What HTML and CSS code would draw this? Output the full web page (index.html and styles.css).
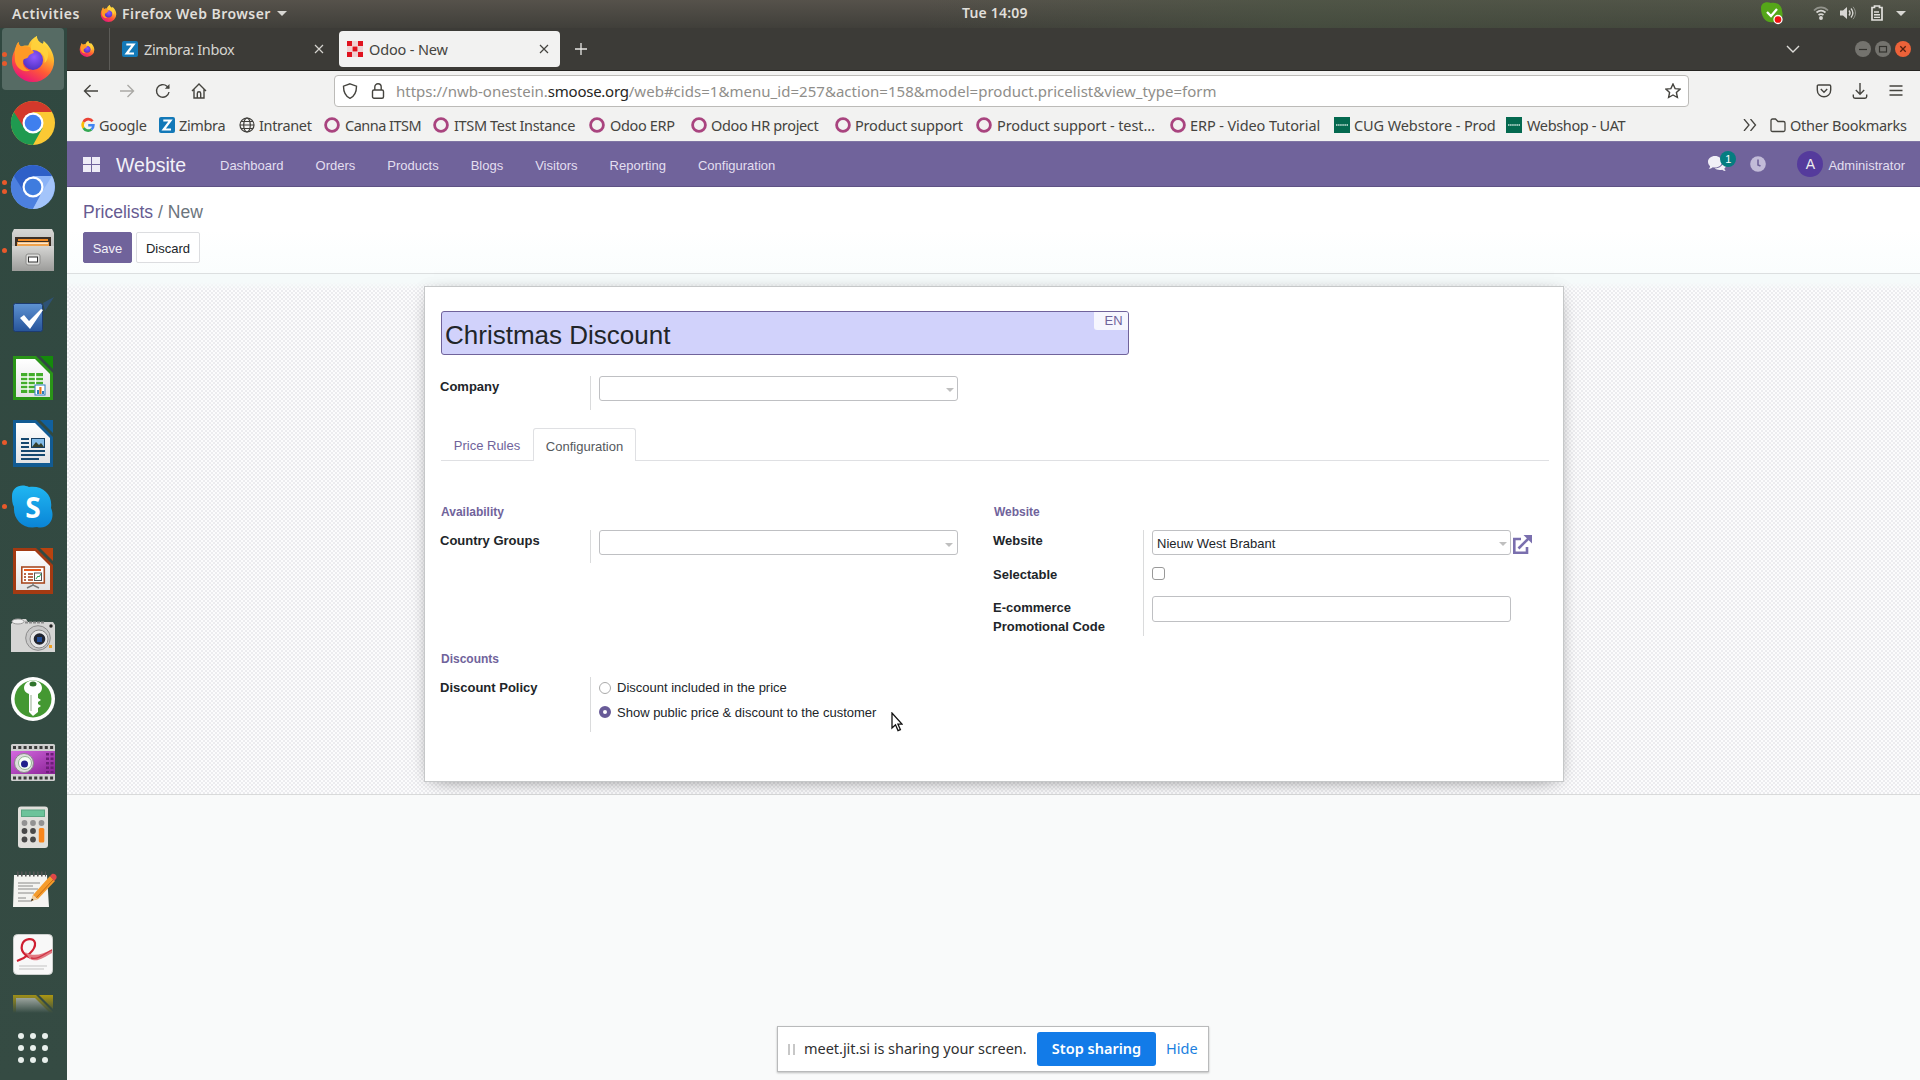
FILE: index.html
```html
<!DOCTYPE html>
<html lang="en">
<head>
<meta charset="utf-8">
<title>Odoo - New</title>
<link rel="stylesheet" href="styles.css">
</head>
<body>
<svg class="defs" width="0" height="0" aria-hidden="true">
  <defs>
    <linearGradient id="ffBody" x1=".8" y1="0" x2=".3" y2="1"><stop offset="0" stop-color="#fff44f"/><stop offset=".35" stop-color="#ffb52a"/><stop offset=".65" stop-color="#ff5a36"/><stop offset="1" stop-color="#e8127c"/></linearGradient>
    <radialGradient id="ffCore" cx=".55" cy=".35" r=".7"><stop offset="0" stop-color="#9059ff"/><stop offset="1" stop-color="#4b2fc0"/></radialGradient>
    <linearGradient id="metal" x1="0" y1="0" x2="0" y2="1"><stop offset="0" stop-color="#d6d6d4"/><stop offset="1" stop-color="#9c9c9a"/></linearGradient>
    <linearGradient id="paper" x1="0" y1="0" x2="0" y2="1"><stop offset="0" stop-color="#fff"/><stop offset="1" stop-color="#e2e2e4"/></linearGradient>
    <linearGradient id="blueBox" x1="0" y1="0" x2="0" y2="1"><stop offset="0" stop-color="#5e93d3"/><stop offset="1" stop-color="#27549a"/></linearGradient>
    <linearGradient id="skype" x1="0" y1="0" x2="0" y2="1"><stop offset="0" stop-color="#20b7f2"/><stop offset="1" stop-color="#0a84d6"/></linearGradient>
    <linearGradient id="film" x1="0" y1="0" x2="1" y2="1"><stop offset="0" stop-color="#d46ae0"/><stop offset="1" stop-color="#8a2196"/></linearGradient>
  </defs>
  <symbol id="firefox" viewBox="0 0 48 48">
    <path fill="url(#ffBody)" d="M5 15c1-4 2-7 4-9 0 3 1 4 3 5 2-1 4-1 7-1 2-5 5-8 9-10 0 4 2 6 6 8 1-1 1-2 1-3 6 5 11 13 11 21a22 22 0 0 1-44 0c0-4 1-8 3-11z"/>
    <circle cx="24" cy="25" r="10.500" fill="url(#ffCore)"/>
    <path fill="#ff9a26" d="M5 14l4-8c0 3 1 5 4 5 4-1 8 0 10 3l2 3c-2 2-5 2-6 5-1 2-4 1-5 3-2 5 2 10 7 11-8 3-16-4-16-12z"/>
    <path fill="#ffd23c" d="M28 0c0 5 3 7 7 10 5 4 6 9 4 14-1 3-3 4-3 4 1-6-2-10-6-12-3-2-5-2-8-1-1-4 1-11 6-15z" opacity=".9"/>
  </symbol>
  <symbol id="zimbra" viewBox="0 0 16 16"><rect width="16" height="16" rx="2" fill="#1379b8"/><path d="M4.300 3.500h7.200L4.700 12.500h7.300" fill="none" stroke="#fff" stroke-width="2.200"/></symbol>
  <symbol id="ring" viewBox="0 0 16 16"><circle cx="8" cy="8" r="6.400" fill="none" stroke="#a9447f" stroke-width="2.800"/></symbol>
  <symbol id="shop" viewBox="0 0 16 16"><rect width="16" height="16" fill="#04694f"/><path d="M2 8h12" stroke="#9cc7ba" stroke-width="1.800" stroke-dasharray="1.500 .6"/></symbol>
  <symbol id="cross" viewBox="0 0 10 10"><path d="M1 1l8 8M9 1L1 9" fill="none" stroke="currentColor" stroke-width="1.200"/></symbol>
</svg>

<header class="topbar">
  <span class="activities">Activities</span>
  <span class="app-menu"><svg class="i17"><use href="#firefox"/></svg><span class="app-name">Firefox Web Browser</span><i class="caret"></i></span>
  <time class="clock">Tue 14:09</time>
  <div class="tray">
    <svg class="tray-ok" width="24" height="24" viewBox="0 0 24 24"><path d="M1 7C1 2 6 0 11 2c7-1 11 3 11 8 2 6-1 12-8 11C6 23 1 16 1 7z" fill="#55a619"/><path d="M7 11l4 4 6-7" fill="none" stroke="#fff" stroke-width="2.300"/><circle cx="18" cy="18.500" r="4" fill="#e11" stroke="#fff" stroke-width="1.300"/></svg>
    <svg class="tray-wifi" width="16" height="14" viewBox="0 0 16 14" fill="none" stroke="#d8d7d3" stroke-width="1.700"><path d="M1 4.500C5 .2 11 .2 15 4.500" opacity=".5"/><path d="M3.500 6.500c3-2.500 6-2.500 9 0"/><path d="M5.500 9c2-1.400 3-1.400 5 0"/><circle cx="8" cy="12" r="1.100" fill="#d8d7d3"/></svg>
    <svg class="tray-sound" width="16" height="14" viewBox="0 0 16 14"><path d="M0 4.500h3L7 1v12L3 9.500H0z" fill="#d8d7d3"/><path d="M9 4.500c1.300 1.500 1.300 3.500 0 5M11 2.500c2.500 3 2.500 6 0 9" fill="none" stroke="#d8d7d3" stroke-width="1.300"/><path d="M13 .8c3.200 4 3.200 8.400 0 12.400" fill="none" stroke="#d8d7d3" opacity=".5"/></svg>
    <svg class="tray-batt" width="12" height="16" viewBox="0 0 12 16"><path d="M3.500 2.500V1h5v1.500H11V15H1V2.500z" fill="none" stroke="#e2e1dd" stroke-width="1.700"/><path d="M3 7h5M3 9.700h6M3 12.400h6" stroke="#e2e1dd" stroke-width="1.400"/></svg>
    <i class="caret"></i>
  </div>
</header>

<div class="desktop">
<nav class="dock">
  <div class="dock-list">
    <div class="tile active two"><svg><use href="#firefox"/></svg></div>
    <div class="tile"><svg viewBox="0 0 48 48"><circle cx="24" cy="24" r="22" fill="#fbc934"/><path d="M4.900 13A22 22 0 0 0 24 46l9.500-17L24 24z" fill="#1f9a50"/><path d="M4.900 13l9.600 15L24 13h19A22 22 0 0 0 4.900 13z" fill="#d3392b"/><circle cx="24" cy="24" r="10.500" fill="#fff"/><circle cx="24" cy="24" r="8.300" fill="#3f7fee"/></svg></div>
    <div class="tile two"><svg viewBox="0 0 48 48"><circle cx="24" cy="24" r="22" fill="#8bb3f7"/><path d="M4.900 13A22 22 0 0 0 24 46l9.500-17L24 24z" fill="#4c80df"/><path d="M4.900 13l9.600 15L24 13h19A22 22 0 0 0 4.900 13z" fill="#2e60c8"/><path d="M24 46l9-17 10-16c8 16-4 33-19 33z" fill="#a3c4fa"/><circle cx="24" cy="24" r="10.500" fill="#fff"/><circle cx="24" cy="24" r="8.300" fill="#3f7cde"/></svg></div>
    <div class="tile one"><svg viewBox="0 0 48 48"><path d="M5 2h38l2 4v38H3V6z" fill="url(#metal)"/><path d="M6 10h36v11H6z" fill="#3b2f26"/><path d="M9 12h30v2H9z" fill="#f08a24"/><path d="M8 15h32v5H8z" fill="#f0a24c"/><path d="M9 15.500h30v1.500H9z" fill="#fbe6cc"/><path d="M3 19h42v25H3z" fill="url(#metal)"/><rect x="17" y="27" width="14" height="11" rx="2" fill="#dededc" stroke="#8c8c8a"/><rect x="19.500" y="30" width="9" height="5" fill="#fff" stroke="#333"/></svg></div>
    <div class="tile"><svg viewBox="0 0 48 48"><rect x="4.500" y="12.500" width="29" height="28" rx="2" fill="url(#blueBox)" stroke="#1d3c70"/><path d="M34 12l11-6-9 14z" fill="#2c5a9e" opacity=".55"/><path d="M11 27l4-3 5 6 12-12 2 1-13 19z" fill="#fff"/></svg></div>
    <div class="tile"><svg viewBox="0 0 48 48"><path d="M4 1h23l17 17v27H4z" fill="#2a9518"/><path d="M31 1h13v13z" fill="#158a0b"/><path d="M7 4h19l15 15v23H7z" fill="url(#paper)"/><path d="M12 18h22v20H12z" fill="#43ad2b"/><path d="M12 22h22M12 26h22M12 30h22M12 34h22M19 18v20M26.500 18v20" stroke="#fff" stroke-width="1.300"/><rect x="26" y="30" width="10" height="10" fill="#fff" stroke="#2b7bbd"/><path d="M28 39v-4h2v4zM33 39v-3h2v3z" fill="#2b7bbd"/><path d="M30.300 39v-7h2.200v7z" fill="#e7761a"/></svg></div>
    <div class="tile one"><svg viewBox="0 0 48 48"><path d="M4 1h23l17 17v30H4z" fill="#125b93"/><path d="M31 1h13v13z" fill="#11609e"/><path d="M7 4h19l15 15v25H7z" fill="url(#paper)"/><path d="M12 20h8M12 24h8M12 28h8M12 32h24M12 36h24M12 40h18" stroke="#16486f" stroke-width="2"/><rect x="22.500" y="19.500" width="13" height="9" fill="#85bce8" stroke="#163f62"/><path d="M23 28l4-5 3 3 2-2 3 4z" fill="#37402c"/></svg></div>
    <div class="tile one skype"><svg viewBox="0 0 48 48"><path d="M3 13C3 4 12 0 20 4c14-2 24 8 22 21 5 11-3 22-14 19C14 47 4 36 5 24 3 20 3 17 3 13z" fill="url(#skype)"/><text x="24" y="34.500" text-anchor="middle">S</text></svg></div>
    <div class="tile"><svg viewBox="0 0 48 48"><path d="M4 1h23l17 17v29H4z" fill="#a33a12"/><path d="M31 1h13v13z" fill="#b9430f"/><path d="M7 4h19l15 15v24H7z" fill="url(#paper)"/><rect x="12.800" y="20" width="22.500" height="16" fill="#fff" stroke="#a94a22" stroke-width="1.600"/><path d="M15 23h17" stroke="#e9581a" stroke-width="2"/><path d="M15 27h2M15 30h2M15 33h2M19 27h5M19 30h5M19 33h5" stroke="#a33a12" stroke-width="1.600"/><rect x="25.500" y="26" width="7" height="7.500" fill="#fff" stroke="#555"/><path d="M27 32l2-3 1 1 2-3" fill="none" stroke="#23a455"/><path d="M24 36v2M18 41l6-3 6 3" fill="none" stroke="#777" stroke-width="1.500"/></svg></div>
    <div class="tile"><svg viewBox="0 -3 48 48"><path d="M4 8l5-3h8l2 3h25l2 3v27H2V10z" fill="#d5d5d4"/><ellipse cx="9" cy="7.500" rx="6" ry="2.500" fill="#eee" stroke="#999"/><path d="M16 8.500h20" stroke="#8b8b8b" stroke-width="2" stroke-dasharray="3 1"/><circle cx="29" cy="24" r="12.300" fill="#c9c9c9" stroke="#8c8c8c"/><circle cx="30" cy="25" r="9" fill="#e7e7e7" stroke="#888"/><circle cx="30.500" cy="25" r="5.800" fill="#20242f"/><rect x="28" y="23" width="5" height="5" fill="#234d96"/><circle cx="42" cy="12" r="1.700" fill="#222"/><rect x="40" y="31" width="3" height="3" fill="#f0a020"/></svg></div>
    <div class="tile"><svg viewBox="0 0 48 48"><circle cx="24" cy="24" r="22" fill="#fff"/><circle cx="24" cy="24" r="18.500" fill="#449832"/><path d="M24 5.500c5 0 9 3 9 7.500 0 3-2 5-4 6v4l3 2-3 2v2l3 2-3 2v4l-5 4-4-4V19c-3-1-5-3-5-6 0-4.500 4-7.500 9-7.500z" fill="#fff"/><ellipse cx="24" cy="9" rx="3.500" ry="2.500" fill="#30742c"/><path d="M22 20v16" stroke="#b8c8b4" stroke-width="1.500"/></svg></div>
    <div class="tile"><svg viewBox="0 0 48 48"><rect x="2" y="5" width="44" height="37" rx="1.500" fill="#cfcfcf"/><path d="M4 8.500h41M4 39h41" stroke="#3a3a3a" stroke-width="3" stroke-dasharray="3 2.300"/><path d="M2 12h44v23H2z" fill="url(#film)"/><path d="M38.500 14v20M43 14v20" stroke="#6d1e79" stroke-width="3" stroke-dasharray="2.500 2"/><circle cx="15" cy="24" r="9.500" fill="#ddd" stroke="#888"/><circle cx="16" cy="24" r="6.500" fill="#f7fff7" stroke="#91b791"/><circle cx="15.500" cy="25" r="3.500" fill="#20208c"/></svg></div>
    <div class="tile"><svg viewBox="0 0 48 48"><rect x="9" y="3.500" width="30" height="41.500" rx="3" fill="#e0dfdb"/><rect x="12.500" y="7" width="23" height="6.500" fill="#6cc39a" stroke="#59a481"/><g fill="#929292"><circle cx="15.500" cy="20" r="2.900"/><circle cx="24" cy="20" r="2.900"/><circle cx="32.500" cy="20" r="2.900"/></g><g fill="#484848"><circle cx="15.500" cy="28" r="2.900"/><circle cx="24" cy="28" r="2.900"/><circle cx="15.500" cy="36.500" r="2.900"/><circle cx="24" cy="36.500" r="2.900"/></g><rect x="29.800" y="25" width="5.500" height="14.500" rx="1.500" fill="#f8861c"/></svg></div>
    <div class="tile"><svg viewBox="0 0 48 48"><path d="M5 8h33l2 32H4z" fill="#f4f4f1"/><path d="M8 7h29" stroke="#555" stroke-width="5" stroke-dasharray="1.600 2.400"/><path d="M9 16h22M9 19h15M9 22h20M9 26h16M9 31h8M9 34h14" stroke="#8a8a88"/><path d="M22 34l2-6L41 9l5 5-17 18z" fill="#f59c2c"/><path d="M27 31L44 13" stroke="#c86910"/><path d="M22 34l2-6 5 4z" fill="#f0cfa0"/><path d="M22 34l1-2.500 1.500 1.500z" fill="#111"/><path d="M41 9l2-2c3-1 6 2 4 5l-2 2z" fill="#e04848"/></svg></div>
    <div class="tile"><svg viewBox="0 0 48 48"><rect x="4.500" y="3.500" width="39" height="40" rx="4" fill="#f8f8f8" stroke="#cdd0ce"/><path d="M8 30C17 27 27 19 26 12c-1-6-11-5-13 2-2 8 6 13 14 14" fill="none" stroke="#cf1f31" stroke-width="2.200"/><path d="M16 21c8 5 17 3 27-3v4c-8 4-14 10-22 6z" fill="#e27a82"/><path d="M22 27c8 2 14-5 21-8" fill="none" stroke="#cf3445" stroke-width="1.300"/><path d="M10 35h28M10 38h25" stroke="#c3c3c3"/></svg></div>
    <div class="tile"><svg viewBox="0 0 48 48"><path d="M4 0h23l17 17v31H4z" fill="#b09a12"/><path d="M30 0h14v14z" fill="#c0a30a"/><path d="M7 3h19l15 15v27H7z" fill="#c5c8c3"/></svg></div>
    <div class="dock-fade"></div>
  </div>
  <div class="apps"><i></i><i></i><i></i><i></i><i></i><i></i><i></i><i></i><i></i></div>
</nav>

<main class="window">
  <div class="tabbar">
    <div class="pinned"><svg class="i16"><use href="#firefox"/></svg></div>
    <div class="tab"><svg class="i16"><use href="#zimbra"/></svg><span class="t-zim">Zimbra: Inbox</span><svg class="x"><use href="#cross"/></svg></div>
    <div class="tab current"><svg class="i16" viewBox="0 0 16 16" fill="#e0131f"><path d="M0 0h5v5H0zM11 0h5v5h-5zM0 11h5v5H0zM11 11h5v5h-5zM5.500 5.500h5v5h-5z"/><path d="M5 0h6v5H5zM5 11h6v5H5zM0 5h5v6H0zM11 5h5v6h-5z" opacity=".15"/></svg><span class="t-odoo">Odoo - New</span><svg class="x"><use href="#cross"/></svg></div>
    <svg class="plus" viewBox="0 0 12 12"><path d="M6 0v12M0 6h12" stroke="#e8e8e5" stroke-width="1.300"/></svg>
    <svg class="chev" viewBox="0 0 14 8"><path d="M1 1l6 6 6-6" fill="none" stroke="#dddcd8" stroke-width="1.400"/></svg>
    <div class="wins">
      <svg viewBox="0 0 16 16"><circle cx="8" cy="8" r="8" fill="#74736e"/><path d="M4 8.500h8" stroke="#33322e" stroke-width="1.200"/></svg>
      <svg viewBox="0 0 16 16"><circle cx="8" cy="8" r="8" fill="#74736e"/><rect x="4.500" y="5.500" width="7" height="5.500" fill="none" stroke="#33322e" stroke-width="1.200"/></svg>
      <svg viewBox="0 0 16 16"><circle cx="8" cy="8" r="8" fill="#ed6239"/><path d="M5.300 5.300l5.400 5.400M10.700 5.300l-5.400 5.400" stroke="#56200f" stroke-width="1.300"/></svg>
    </div>
  </div>

  <div class="toolbar">
    <div class="nav-buttons">
      <svg viewBox="0 0 16 16"><path d="M15 8H1.500M7.500 2L1.500 8l6 6"/></svg>
      <svg class="off" viewBox="0 0 16 16"><path d="M1 8h13.500M8.500 2l6 6-6 6"/></svg>
      <svg viewBox="0 0 16 16"><path d="M14 9a6.300 6.300 0 1 1-2-5.700L14 5"/><path d="M14.500 1v4.700H9.800z" fill="#45443f" stroke="none"/></svg>
      <svg viewBox="0 0 16 16"><path d="M1 8l7-7 7 7M3 6.500V15h10V6.500M6.300 15v-4.500a1.700 1.700 0 0 1 3.400 0V15"/></svg>
    </div>
    <div class="urlbar">
      <svg class="shield" viewBox="0 0 16 16"><path d="M8 .8l6.500 2.400C14.500 9 13 13 8 15.300 3 13 1.500 9 1.500 3.200z"/></svg>
      <svg class="lock" viewBox="0 0 14 16"><rect x="1.500" y="7" width="11" height="8.200" rx="1.500"/><path d="M3.800 7V4a3.200 3.200 0 0 1 6.400 0v3"/></svg>
      <span class="url">https://nwb-onestein.<b>smoose.org</b><span class="path">/web#cids=1&amp;menu_id=257&amp;action=158&amp;model=product.pricelist&amp;view_type=form</span></span>
      <svg class="star" viewBox="0 0 16 16"><path d="M8 1l2.100 4.600 5 .5-3.700 3.400 1 5L8 12l-4.400 2.500 1-5L.9 6.100l5-.5z"/></svg>
    </div>
    <div class="tools">
      <svg viewBox="0 0 16 16"><path d="M2.500 2h11c.7 0 1.200.5 1.200 1.200V7c0 9-13.400 9-13.400 0V3.200C1.300 2.500 1.800 2 2.500 2z"/><path d="M4.800 6l3.200 3.200L11.200 6"/></svg>
      <svg viewBox="0 0 16 16"><path d="M8 0v11M3.800 7L8 11.200 12.200 7M1.300 11.500v2c0 1 .7 1.700 1.700 1.700h10c1 0 1.700-.7 1.700-1.700v-2"/></svg>
      <svg viewBox="0 0 16 16"><path d="M1.500 3h13M1.500 7.500h13M1.500 12h13"/></svg>
    </div>
  </div>

  <div class="bookmarks">
    <a class="google"><svg class="i16" viewBox="0 0 16 16" fill="none" stroke-width="2.600"><path d="M11.600 4.300A5.300 5.300 0 0 0 2.600 5" stroke="#ea4335"/><path d="M2.600 5a5.500 5.500 0 0 0 0 6" stroke="#fbbc05"/><path d="M2.600 11a5.300 5.300 0 0 0 7.800 1.500" stroke="#34a853"/><path d="M7.200 8.200h5.200c0 2-.7 3.400-2 4.300" stroke="#4285f4"/></svg>Google</a>
    <a class="tight"><svg class="i16"><use href="#zimbra"/></svg>Zimbra</a>
    <a class="tight"><svg class="i16" viewBox="0 0 16 16" fill="none" stroke="#3e3d39" stroke-width="1.200"><circle cx="8" cy="8" r="7"/><ellipse cx="8" cy="8" rx="3.300" ry="7"/><path d="M1 8h14M2 4.500h12M2 11.500h12"/></svg>Intranet</a>
    <a class="slim"><svg class="i16"><use href="#ring"/></svg>Canna ITSM</a>
    <a><svg class="i16"><use href="#ring"/></svg>ITSM Test Instance</a>
    <a><svg class="i16"><use href="#ring"/></svg>Odoo ERP</a>
    <a class="tight"><svg class="i16"><use href="#ring"/></svg>Odoo HR project</a>
    <a class="tight more-wide"><svg class="i16"><use href="#ring"/></svg>Product support</a>
    <a class="wide"><svg class="i16"><use href="#ring"/></svg>Product support - test…</a>
    <a class="wide tight"><svg class="i16"><use href="#ring"/></svg>ERP - Video Tutorial</a>
    <a class="wide tight"><svg class="i16"><use href="#shop"/></svg>CUG Webstore - Prod</a>
    <a><svg class="i16"><use href="#shop"/></svg>Webshop - UAT</a>
    <svg class="more" viewBox="0 0 14 12"><path d="M1 0l5 6-5 6M7.500 0l5 6-5 6" fill="none" stroke="#45443f" stroke-width="1.300"/></svg>
    <a class="tight others"><svg class="i16" viewBox="0 0 16 16"><path d="M1 13V3.500C1 2.500 1.600 2 2.500 2h3L8 4.500h5.500c1 0 1.500.5 1.500 1.500v7c0 1-.5 1.500-1.500 1.500h-11C1.500 14.500 1 14 1 13z" fill="none" stroke="#45443f" stroke-width="1.300"/></svg>Other Bookmarks</a>
  </div>

  <div class="odoo">
    <nav class="menu">
      <svg class="grid" viewBox="0 0 17 15" fill="#eeecf6"><path d="M0 0h8v7H0zM9 0h8v7H9zM0 8h8v7H0zM9 8h8v7H9z"/></svg>
      <span class="brand">Website</span>
      <div class="links"><a>Dashboard</a><a>Orders</a><a>Products</a><a>Blogs</a><a>Visitors</a><a>Reporting</a><a>Configuration</a></div>
      <div class="sys">
        <span class="chat"><svg viewBox="0 0 18 16" fill="#f1eff7"><path d="M7 0c4 0 7 2.500 7 5.800s-3 5.800-7 5.800c-.8 0-1.500 0-2.200-.3C3.500 12.300 2 13 .8 13c.7-.9 1.200-1.700 1.300-2.700C.8 9.200 0 7.500 0 5.800 0 2.500 3 0 7 0z"/><path d="M15.300 5.200c1.700 1 2.700 2.300 2.700 4 0 1.400-.7 2.500-1.700 3.400.2.900.6 1.600 1.400 2.400-1.400 0-2.500-.4-3.500-1.200-3 .6-6 0-7.500-1.500 5 .1 8.600-2.900 8.600-7.100z"/></svg><b class="badge">1</b></span>
        <svg class="time" viewBox="0 0 16 16"><circle cx="8" cy="8" r="7.800" fill="#c2bbd8"/><path d="M8 3.500V9l2.500 1" fill="none" stroke="#70639a" stroke-width="1.600"/></svg>
        <span class="avatar">A</span><span class="user">Administrator</span>
      </div>
    </nav>

    <section class="control">
      <div class="crumbs"><a>Pricelists</a><span> / New</span></div>
      <div class="actions"><button class="save">Save</button><button class="discard">Discard</button></div>
    </section>

    <section class="canvas">
      <article class="sheet">
        <div class="title"><span>Christmas Discount</span><em class="lang">EN</em></div>
        <div class="group company"><label>Company</label><div class="cell"><div class="input"><i class="arr"></i></div></div></div>
        <div class="tabs"><a>Price Rules</a><a class="on">Configuration</a></div>
        <div class="columns">
          <div class="col">
            <h4>Availability</h4>
            <div class="group country"><label>Country Groups</label><div class="cell"><div class="input low"><i class="arr"></i></div></div></div>
            <h4 class="disc-head">Discounts</h4>
            <div class="group policy"><label>Discount Policy</label><div class="cell">
              <div class="radio"><i></i>Discount included in the price</div>
              <div class="radio sel"><i></i>Show public price &amp; discount to the customer</div>
            </div></div>
          </div>
          <div class="col right">
            <h4>Website</h4>
            <div class="group site">
              <div class="labels"><label>Website</label><label>Selectable</label><label class="wrap">E-commerce<br>Promotional Code</label></div>
              <div class="cell">
                <div class="row"><div class="input">Nieuw West Brabant<i class="arr"></i></div><svg class="ext" viewBox="0 0 20 20" fill="none" stroke="#7a6fae" stroke-width="2.600"><path d="M9 4H2.300v13.700H15V12"/><path d="M6.500 13.500L17 3"/><path d="M11.500 0H20v8.500z" fill="#7a6fae" stroke="none"/></svg></div>
                <i class="check"></i>
                <div class="input promo"></div>
              </div>
            </div>
          </div>
        </div>
      </article>
    </section>
    <div class="blank"></div>
  </div>
</main>
</div>

<div class="share"><i class="grip"></i><span class="msg">meet.jit.si is sharing your screen.</span><button>Stop sharing</button><a>Hide</a></div>
<svg class="cursor" viewBox="0 0 12 20"><path d="M1 1v15l3.500-3.200L7 18.600l2.400-1-2.500-5.500H11z" fill="#fff" stroke="#111" stroke-width="1.300"/></svg>
</body>
</html>
```
FILE: styles.css
```css
* { box-sizing: border-box; }
body { margin: 0; width: 1920px; height: 1080px; overflow: hidden; display: flex; flex-direction: column; background: #f9fafa; font: 15px "Noto Sans", sans-serif; position: relative; }
svg { display: block; flex: none; }
.defs { position: absolute; }
.i16 { width: 16px; height: 16px; }
.i17 { width: 17px; height: 17px; }
button { font: inherit; border: 0; padding: 0; }

/* desktop top bar */
.topbar { height: 28px; flex: none; display: grid; grid-template-columns: 88px 862px 1fr auto; align-items: center; padding: 0 14px 2px 12px; background: linear-gradient(to right, rgba(75,90,65,0) 48%, rgba(73,88,66,.5) 68%, rgba(73,88,66,.3)), linear-gradient(#56524b, #403f3a); color: #e0dfda; font: 600 14px "Noto Sans", sans-serif; }
.app-menu { display: flex; align-items: center; }
.activities { letter-spacing: .55px; }
.app-name { margin: 0 6px 0 5px; letter-spacing: .45px; }
.clock { letter-spacing: .2px; line-height: 18px; padding-bottom: 1px; }
.caret { width: 0; height: 0; border: 5px solid transparent; border-top-color: #d8d7d3; border-bottom: 0; }
.tray { display: flex; align-items: center; }
.tray-wifi { margin-left: 29px; }
.tray-sound { margin-left: 11px; }
.tray-batt { margin: 0 13px 0 15px; }

.desktop { flex: 1; min-height: 0; display: flex; }

/* launcher */
.dock { width: 67px; flex: none; display: flex; flex-direction: column; background: linear-gradient(#304840, #354b43); }
.dock-list { position: relative; height: 986px; overflow: hidden; display: flex; flex-direction: column; gap: 2px; padding-left: 2px; }
.tile { position: relative; width: 62px; height: 62px; flex: none; display: flex; align-items: center; justify-content: center; border-radius: 4px; }
.tile svg { width: 48px; height: 48px; }
.tile.active { background: #566b64; }
.tile.active svg { width: 46px; height: 46px; }
.tile.one::before, .tile.two::before, .tile.two::after { content: ""; position: absolute; left: 0; top: 28px; width: 5px; height: 5px; border-radius: 50%; background: #e8592b; }
.tile.two::before { top: 24px; }
.tile.two::after { top: 33px; }
.skype text { font: bold 28px "Open Sans", sans-serif; fill: #fff; }
.dock-fade { position: absolute; left: 0; right: 0; bottom: 0; height: 22px; background: linear-gradient(rgba(53,75,67,0), #354b43 95%); }
.apps { width: 31px; margin: 19px 0 0 18px; display: grid; grid-template-columns: repeat(3, 6px); gap: 6px; }
.apps i { height: 6px; border-radius: 50%; background: #e8efec; }

/* browser */
.window { flex: 1; display: flex; flex-direction: column; min-width: 0; }
.tabbar { height: 43px; flex: none; display: flex; align-items: center; background: #3c3b37; border-bottom: 1px solid #242320; color: #d5d4cf; }
.pinned { width: 43px; height: 42px; display: flex; align-items: center; padding-left: 12px; border-right: 1px solid #5c5b57; }
.tab { width: 221px; height: 36px; display: flex; align-items: center; gap: 6px; padding: 0 11px 0 8px; border-radius: 4px; font-size: 14.500px; letter-spacing: -.35px; }
.pinned + .tab { margin-left: 4px; width: 225px; padding-right: 15px; }
.tab .x { width: 10px; height: 10px; margin-left: auto; }
.tab.current { background: #f2f2f1; color: #45443f; }
.t-odoo { letter-spacing: -.15px; }
.plus { width: 12px; height: 12px; margin-left: 15px; }
.chev { width: 14px; height: 8px; margin-left: auto; }
.wins { display: flex; gap: 4px; margin: 0 9px 0 55px; }
.wins svg { width: 16px; height: 16px; }

.toolbar { height: 40px; flex: none; display: flex; align-items: center; background: #f2f2f1; }
.toolbar svg { width: 16px; height: 16px; fill: none; stroke: #45443f; stroke-width: 1.400; }
.toolbar svg.off { stroke: #aaa9a5; }
.nav-buttons { width: 267px; display: flex; gap: 20px; padding-left: 16px; }
.urlbar { width: 1355px; height: 32px; display: flex; align-items: center; border: 1px solid #bcbbb8; border-radius: 4px; background: #fff; padding-left: 7px; }
.toolbar .lock { width: 14px; margin: 0 11px 0 13px; }
.url { color: #8f8e8a; font-size: 15px; letter-spacing: 0; white-space: nowrap; }
.url b { font-weight: 400; color: #262522; letter-spacing: -.25px; }
.path { letter-spacing: .03px; }
.star { margin: 0 7px 0 auto; }
.tools { display: flex; gap: 20px; margin: 0 16px 0 auto; }

.bookmarks { height: 30px; flex: none; display: grid; align-items: center; grid-template-columns: 78px 80px 85px 109px 156px 102px 144px 141px 194px 164px 172px 237px 27px 1fr; padding: 0 0 2px 14px; background: #f2f2f1; color: #45443f; font-size: 14.500px; letter-spacing: -.35px; white-space: nowrap; }
.bookmarks a { display: flex; align-items: center; gap: 5px; }
.bookmarks .google { gap: 2px; letter-spacing: -.2px; }
.bookmarks .tight { gap: 4px; }
.bookmarks .slim { gap: 5px; letter-spacing: -.5px; }
.bookmarks .wide { letter-spacing: -.1px; }
.bookmarks .more-wide { letter-spacing: -.2px; }
.bookmarks .others { letter-spacing: -.25px; }
.more { width: 14px; height: 12px; }

/* web application */
.odoo { flex: 1; display: flex; flex-direction: column; font: 13px "Liberation Sans", Arial, sans-serif; color: #212529; }
.menu { height: 46px; flex: none; display: flex; align-items: center; padding: 0 15px 0 16px; background: #70639b; border-top: 1px solid #7f75a4; border-bottom: 1px solid #5e5284; color: #e3dff0; }
.grid { width: 17px; height: 15px; }
.brand { font-size: 19.500px; margin-left: 16px; padding-top: 3px; width: 104px; color: #f3f1f8; }
.links { display: flex; gap: 32px; padding-top: 2px; }
.sys { margin-left: auto; display: flex; align-items: center; }
.user { padding-top: 2px; }
.chat { position: relative; width: 42px; }
.chat svg { width: 18px; height: 16px; }
.badge { position: absolute; left: 12px; top: -5px; width: 16px; height: 16px; border-radius: 8px; background: #057d80; color: #fff; font: 11px/16px "Liberation Sans", sans-serif; text-align: center; }
.time { width: 16px; height: 16px; }
.avatar { width: 26px; height: 26px; margin: 0 5px 0 31px; border-radius: 50%; background: #553b9c; color: #eee; display: grid; place-items: center; font-size: 14px; }

.control { height: 87px; flex: none; padding: 15px 16px 0; background: linear-gradient(#fff 50%, #fafdfd); border-bottom: 1px solid #dcdfe0; }
.crumbs { font-size: 17.550px; line-height: 20px; color: #6c757d; white-space: pre; }
.crumbs a { color: #665b91; }
.actions { display: flex; gap: 4px; margin-top: 10px; }
.actions button { height: 31px; border-radius: 2px; border: 1px solid #70639b; background: #70639b; color: #f3f1f8; width: 49px; padding-top: 2px; }
.actions .discard { width: 64px; background: #fff; border-color: #dcdde0; color: #212529; }

.canvas { height: 521px; flex: none; padding: 12px 0 0 357px; border-bottom: 1px solid #d9dada; background: linear-gradient(#f5fafa 8px, rgba(245,250,250,0) 16px), conic-gradient(#ececef 25%, #fcfcfd 0 50%, #ececef 0 75%, #fcfcfd 0) 0 0 / 4px 4px; }
.sheet { width: 1140px; height: 496px; background: #fff; border: 1px solid #c6c8c9; box-shadow: 0 5px 20px -10px rgba(0,0,0,.55), 0 0 12px rgba(0,0,0,.06); padding: 24px 14px 0 16px; }
.title { width: 688px; height: 44px; display: flex; justify-content: space-between; border: 1px solid #70639b; border-radius: 3px; background: #d1d2fb; padding-left: 3px; font-size: 26px; line-height: 46px; }
.lang { width: 34px; height: 18px; background: #f6f6fe; border-radius: 0 2px 0 3px; font: 13px/18px "Liberation Sans", sans-serif; color: #70639b; text-align: center; padding-left: 5px; }
.group { display: grid; grid-template-columns: 149px 369px; }
label { font-weight: bold; line-height: 19px; padding-top: 1px; margin-left: -1px; }
.cell { border-left: 1px solid #dadbdc; padding-left: 8px; }
.input { position: relative; flex: none; width: 359px; height: 25px; border: 1px solid #bfc0c3; border-radius: 3px; padding-left: 4px; line-height: 25px; }
.arr { position: absolute; right: 3px; top: 11px; border: 4px solid transparent; border-top-color: #bfbfbf; border-bottom: 0; }
.input.low .arr { right: 4px; top: 12px; }
.company { margin-top: 21px; height: 34px; }
.tabs { height: 33px; margin-top: 18px; display: flex; border-bottom: 1px solid #dfe0e3; }
.tabs a { width: 92px; text-align: center; line-height: 36px; color: #70639b; }
.tabs .on { width: 103px; height: 33px; border: 1px solid #dfe0e3; border-bottom: 0; background: #fff; color: #55595d; line-height: 35px; border-radius: 3px 3px 0 0; }
.columns { display: grid; grid-template-columns: 553px 1fr; }
h4 { margin: 42px 0 0; height: 27px; font: bold 12px/18px "Liberation Sans", sans-serif; color: #70639b; }
.country { height: 33px; }
.disc-head { margin-top: 87px; }
.policy { height: 55px; }
.radio { display: flex; align-items: center; gap: 6px; height: 25px; margin-top: -2px; white-space: nowrap; }
.radio + .radio { margin-top: 0; }
.radio i { width: 12px; height: 12px; border: 1px solid #aaa; border-radius: 50%; }
.radio.sel i { border: 4px solid #685b98; margin-top: -2px; }
.site { height: 106px; }
.site .labels { display: flex; flex-direction: column; }
.site .labels label { height: 34px; }
.site .labels .wrap { margin-top: -1px; }
.row { display: flex; gap: 1px; }
.ext { width: 20px; height: 20px; margin-top: 5px; }
.check { display: block; width: 13px; height: 13px; border: 1px solid #999; border-radius: 3px; margin: 12px 0 16px; }
.promo { height: 26px; }
.blank { flex: 1; background: #f9fafa; }

/* screen sharing notice */
.share { position: absolute; left: 777px; top: 1026px; width: 432px; height: 46px; display: flex; align-items: center; background: #fff; border: 1px solid #b9babb; box-shadow: 0 1px 2px rgba(0,0,0,.25); padding-left: 10px; font-size: 14.500px; color: #2f2f30; }
.grip { width: 7px; height: 11px; border: solid #c7c7c7; border-width: 0 2px; margin-right: 9px; }
.msg { width: 233px; white-space: nowrap; padding-bottom: 2px; letter-spacing: -.03px; }
.share button { width: 119px; height: 34px; border-radius: 3px; background: #127be8; color: #fff; font-weight: 600; padding-bottom: 2px; }
.share a { color: #1b7fe0; margin-left: 10px; padding-bottom: 2px; }
.cursor { position: absolute; left: 891px; top: 712px; width: 12px; height: 20px; }
```
